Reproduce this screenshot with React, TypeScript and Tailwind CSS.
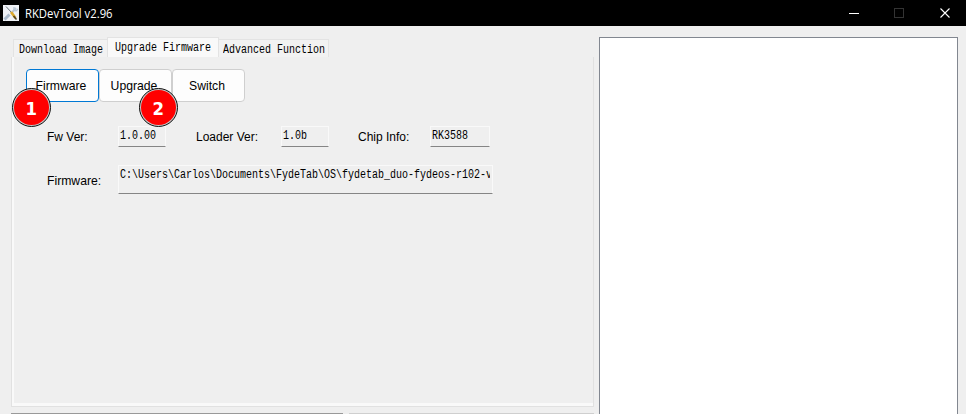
import React from "react";

const mono = "font-['Liberation_Mono',monospace]";

function Mono({ children }: { children: string }) {
  return (
    <span
      className={`${mono} block w-max origin-left scale-x-[0.8333] whitespace-pre text-[12px] leading-[14px] text-black`}
    >
      {children}
    </span>
  );
}

function Tab({ label, active, className }: { label: string; active?: boolean; className: string }) {
  return (
    <div
      className={`shrink-0 border-x border-t border-[#e3e3e3] ${
        active ? "h-5 bg-[#f9f9f9] pt-[3px]" : "h-[18px] bg-[#f2f2f2] pt-[3px]"
      } ${className}`}
    >
      <Mono>{label}</Mono>
    </div>
  );
}

function Button({ label, active, step }: { label: string; active?: boolean; step?: string }) {
  return (
    <div className="relative">
      <button
        className={`block h-[33px] w-[73px] rounded-[4px] border bg-[#fdfdfd] pr-[3px] pt-px text-center text-[12.2px] text-black ${
          active ? "border-[#0078d4]" : "border-[#cfcfcf]"
        }`}
      >
        {label}
      </button>
      {step && (
        <div
          className={`absolute top-[19px] z-10 flex size-[39px] items-center justify-center rounded-full border-[1.5px] border-[#111] bg-[#c8c8c8] p-px ${
            active ? "-left-[14px]" : "left-[40px]"
          }`}
        >
          <div className="flex size-full items-center justify-center rounded-full bg-[#ff0000] pt-[3px] font-['DejaVu_Sans',sans-serif] text-[18px] font-bold leading-none text-white">
            <span className="scale-x-[0.92]">{step}</span>
          </div>
        </div>
      )}
    </div>
  );
}

function Field({ value, className }: { value: string; className: string }) {
  return (
    <div
      className={`shrink-0 border border-b-[#858585] border-l-[#f9f9f9] border-r-[#f9f9f9] border-t-[#f9f9f9] pl-px pr-[2px] ${className}`}
    >
      <div className="overflow-hidden">
        <Mono>{value}</Mono>
      </div>
    </div>
  );
}

export default function App() {
  return (
    <div className="flex h-[414px] w-[966px] flex-col overflow-hidden bg-[#efefef] font-['Liberation_Sans',Arial,sans-serif] text-[12px] text-black">
      <header className="flex h-[26px] shrink-0 items-center bg-black pl-[3px]">
        <svg width="16" height="16" viewBox="0 0 16 16" className="shrink-0">
          <rect width="16" height="16" fill="#eef1f6" />
          <path d="M1.5 14.5L6.5 9.5" stroke="#a9b9cb" strokeWidth="3" />
          <path d="M9.5 7l3.5-4" stroke="#b9c6d5" strokeWidth="2" />
          <path d="M11 2v3l2 1 2-2" stroke="#b7c4d2" strokeWidth="1.3" fill="none" />
          <path d="M3 1.5l6 6.5" stroke="#65717b" strokeWidth="1" />
          <path d="M8 7l4.5 6" stroke="#d9a72d" strokeWidth="2.6" />
          <path d="M10.5 11l3 3.5" stroke="#4c4023" strokeWidth="1.5" />
        </svg>
        <h1 className="ml-[6px] grow pt-[2px] font-['Open_Sans',sans-serif] text-[12px] font-normal leading-none text-white">
          <span className="inline-block origin-left scale-x-[0.94]">RKDevTool v2.96</span>
        </h1>
        <svg width="117" height="26" viewBox="0 0 117 26" fill="none" className="shrink-0">
          <path d="M0 13.5h10" stroke="#fff" />
          <rect x="45.5" y="8.5" width="9" height="9" stroke="#333" />
          <path d="M91.5 8.5l9 9M100.5 8.5l-9 9" stroke="#fff" strokeWidth="1.1" />
        </svg>
      </header>

      <main className="flex h-[388px]">
        <section className="flex w-[599px] shrink-0 flex-col pl-[11px] pt-[11px]">
          <div className="flex h-5 items-end pl-[2px]">
            <Tab label="Download Image" className="w-[94px] border-r-0 pl-[5px]" />
            <Tab label="Upgrade Firmware" active className="w-[112px] pl-[7px]" />
            <Tab label="Advanced Function" className="w-[110px] border-l-0 pl-[4px]" />
          </div>

          <div className="h-[350px] w-[583px] border-x border-b border-[#e1e1e1]">
            <div className="h-full border-b-3 border-l-2 border-[#f9f9f9] pl-[12px] pt-[12px]">
              <div className="flex">
                <Button label="Firmware" active step="1" />
                <Button label="Upgrade" step="2" />
                <Button label="Switch" />
              </div>

              <div className="mt-[24px] flex h-[21px] items-center pl-[21px]">
                <span className="w-[71px] pt-px">Fw Ver:</span>
                <Field value="1.0.00" className="h-[21px] w-[48px] pt-[2px]" />
                <span className="ml-[30px] w-[85px] whitespace-nowrap pt-px">Loader Ver:</span>
                <Field value="1.0b" className="h-[21px] w-[48px] pt-[2px]" />
                <span className="ml-[29px] w-[72px] whitespace-nowrap pt-px">Chip Info:</span>
                <Field value="RK3588" className="h-[21px] w-[60px] pt-[2px]" />
              </div>

              <div className="mt-[18px] flex h-[29px] items-center pl-[21px]">
                <span className="w-[71px] pt-[4px] text-[12.2px]">Firmware:</span>
                <Field
                  value={"C:\\Users\\Carlos\\Documents\\FydeTab\\OS\\fydetab_duo-fydeos-r102-v"}
                  className="h-[29px] w-[375px] pt-[2px]"
                />
              </div>
            </div>
          </div>

          <div className="mt-[6px] flex h-px gap-[6px]">
            <div className="w-[332px] bg-[#999]" />
            <div className="w-[245px] bg-[#cfcfcf]" />
          </div>
        </section>

        <section className="mt-[11px] w-[359px] shrink-0 border-x border-t border-[#828790] bg-white" />
      </main>
    </div>
  );
}
